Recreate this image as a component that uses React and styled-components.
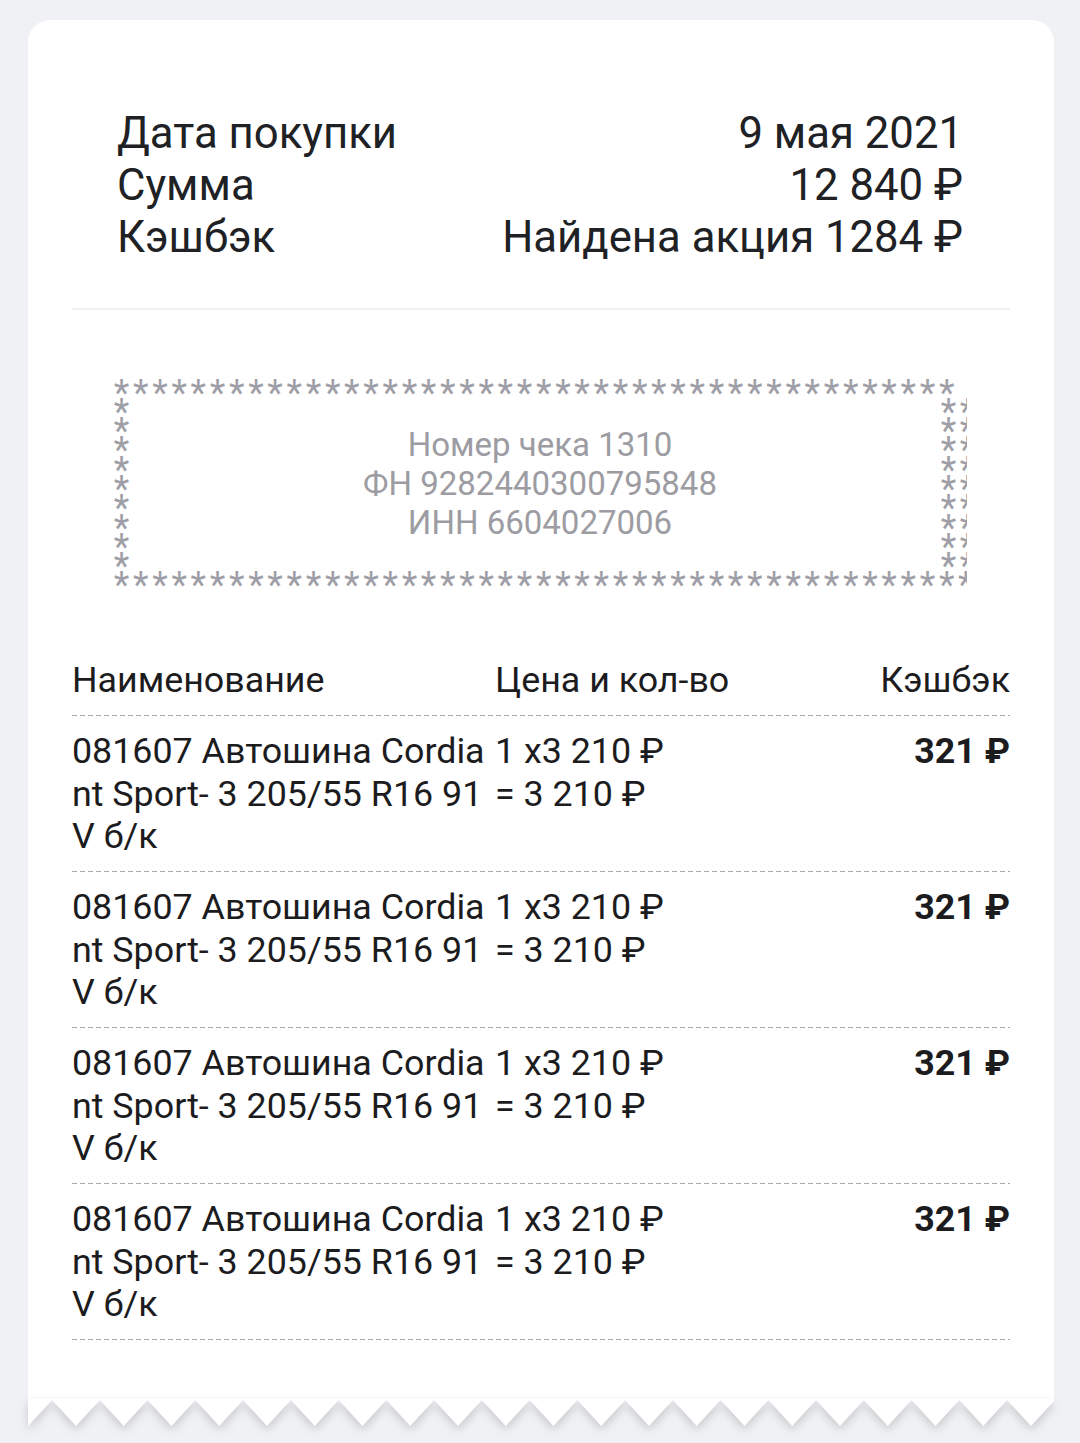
import React from 'react';
import styled, { createGlobalStyle } from 'styled-components';

const GlobalStyle = createGlobalStyle`
  html, body { margin: 0; padding: 0; background: #f0f1f5; }
  body { font-family: Roboto, "Noto Sans", "DejaVu Sans", sans-serif; }
  * { box-sizing: border-box; }
`;

const Page = styled.div`
  width: 1080px;
  height: 1443px;
  padding: 20px 26px 0 28px;
  overflow: hidden;
`;

const Receipt = styled.div`
  display: flex;
  flex-direction: column;
`;

const Card = styled.div`
  background: #ffffff;
  border-radius: 22px 22px 0 0;
  padding: 87px 44px 59px;
`;

const Summary = styled.div`
  display: grid;
  grid-template-columns: 1fr auto;
  padding: 0 47px 0 45px;
  font-size: 43.7px;
  line-height: 52px;
  color: #202124;
`;

const Label = styled.div``;
const Value = styled.div`
  text-align: right;
`;

const Divider = styled.div`
  margin-top: 45px;
  height: 2px;
  background: #eff0f3;
`;

const Frame = styled.div`
  margin: 67px 0 0 40px;
  width: 855px;
  display: grid;
  grid-template-columns: 19.2px 1fr 19.2px 9px;
  grid-template-rows: 19.3px auto 19.3px;
  color: #9fa0a7;
`;

const StarRow = styled.div`
  grid-column: 1 / 5;
  display: flex;
  overflow: hidden;
`;

const StarCol = styled.div`
  display: flex;
  flex-direction: column;
  overflow: hidden;
`;

const Star = styled.span`
  flex: none;
  display: block;
  width: 19.2px;
  height: 19.3px;
  font-size: 36px;
  line-height: 19.3px;
  text-align: center;
  padding-top: 6.5px;
  font-family: Roboto, "DejaVu Sans", sans-serif;
`;

const FrameText = styled.div`
  display: flex;
  flex-direction: column;
  justify-content: center;
  align-items: center;
  padding-left: 10px;
  font-size: 33px;
  line-height: 39px;
  color: #9c9ca2;
`;

const Table = styled.div`
  margin-top: 56px;
  display: flex;
  flex-direction: column;
`;

const Row = styled.div`
  display: grid;
  grid-template-columns: 415px 1fr auto;
  column-gap: 8px;
  padding: 14px 0 14.5px;
  font-size: 35.8px;
  line-height: 42.5px;
  color: #1c1c1e;
  background: repeating-linear-gradient(90deg, #a9a9ad 0 5px, transparent 5px 8px) left bottom / 100% 1.5px no-repeat;
`;

const Cell = styled.div`
  white-space: nowrap;
  text-align: ${(p) => (p.$right ? 'right' : 'left')};
  font-weight: ${(p) => (p.$bold ? 700 : 400)};
`;

const Line = styled.span`
  display: block;
`;

const Zigzag = styled.svg`
  display: block;
  width: 1026px;
  height: 44px;
  overflow: visible;
  filter: drop-shadow(0 4px 5px rgba(0, 0, 0, 0.17));
`;

const stars = (n) => Array.from({ length: n }, (_, i) => <Star key={i}>*</Star>);

const zigPoints = (() => {
  const pts = ['0,0', '1026,0'];
  const period = 47.75;
  const list = [];
  for (let k = -1; k <= 22; k++) {
    list.push([0.25 + period * k, 27]);
    list.push([24.1 + period * k, 1]);
  }
  const sorted = list.filter(([x]) => x >= -48 && x <= 1074).sort((a, b) => b[0] - a[0]);
  const interp = (x) => {
    for (let i = 0; i < sorted.length - 1; i++) {
      const [x1, y1] = sorted[i];
      const [x2, y2] = sorted[i + 1];
      if (x <= x1 && x >= x2) return y1 + ((y2 - y1) * (x - x1)) / (x2 - x1);
    }
    return 14;
  };
  pts.push(`1026,${interp(1026).toFixed(2)}`);
  sorted.forEach(([x, y]) => {
    if (x < 1026 && x > 0) pts.push(`${x.toFixed(2)},${y}`);
  });
  pts.push(`0,${interp(0).toFixed(2)}`);
  return pts.join(' ');
})();

const items = [1, 2, 3, 4];

export default function App() {
  return (
    <Page>
      <GlobalStyle />
      <Receipt>
        <Card>
          <Summary>
            <Label>Дата покупки</Label>
            <Value>9 мая 2021</Value>
            <Label>Сумма</Label>
            <Value>12 840 ₽</Value>
            <Label>Кэшбэк</Label>
            <Value>Найдена акция 1284 ₽</Value>
          </Summary>
          <Divider />
          <Frame>
            <StarRow>{stars(44)}</StarRow>
            <StarCol>{stars(9)}</StarCol>
            <FrameText>
              <span>Номер чека 1310</span>
              <span>ФН 9282440300795848</span>
              <span>ИНН 6604027006</span>
            </FrameText>
            <StarCol>{stars(9)}</StarCol>
            <StarCol>{stars(9)}</StarCol>
            <StarRow>{stars(45)}</StarRow>
          </Frame>
          <Table>
            <Row>
              <Cell>Наименование</Cell>
              <Cell>Цена и кол-во</Cell>
              <Cell $right>Кэшбэк</Cell>
            </Row>
            {items.map((i) => (
              <Row key={i}>
                <Cell>
                  <Line>081607 Автошина Cordia</Line>
                  <Line>nt Sport- 3 205/55 R16 91</Line>
                  <Line>V б/к</Line>
                </Cell>
                <Cell>
                  <Line>1 x3 210 ₽</Line>
                  <Line>= 3 210 ₽</Line>
                </Cell>
                <Cell $right $bold>321 ₽</Cell>
              </Row>
            ))}
          </Table>
        </Card>
        <Zigzag viewBox="0 0 1026 44">
          <polygon points={zigPoints} fill="#ffffff" />
        </Zigzag>
      </Receipt>
    </Page>
  );
}
